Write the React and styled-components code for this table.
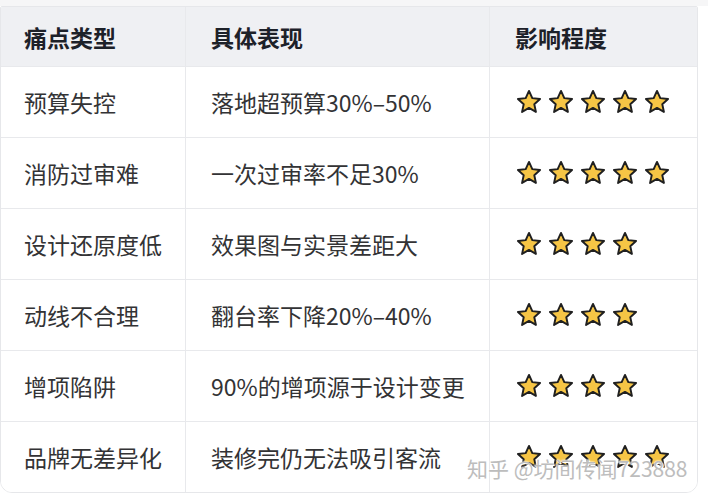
import React from "react";
import styled, { createGlobalStyle } from "styled-components";

const GlobalStyle = createGlobalStyle`
  html, body {
    margin: 0;
    padding: 0;
    background: #ffffff;
  }
  body {
    font-family: "Noto Sans CJK SC", "Noto Sans", sans-serif;
  }
`;

const Page = styled.div`
  position: relative;
  width: 708px;
  height: 500px;
  padding-top: 6px;
  box-sizing: border-box;
  background: linear-gradient(#f6f6f7 0, #f6f6f7 6px, #ffffff 6px);
`;

const Table = styled.div`
  width: 698px;
  border: 1px solid #e6e7ea;
  border-radius: 2px 2px 12px 12px;
  overflow: hidden;
  box-sizing: border-box;
  display: grid;
  grid-template-columns: 185px 304px 1fr;
`;

const Cell = styled.div`
  height: ${(p) => p.$h}px;
  display: flex;
  align-items: center;
  padding-left: ${(p) => (p.$first ? 23 : 25)}px;
  box-sizing: border-box;
  background: ${(p) => (p.$head ? "#eff0f3" : "#ffffff")};
  border-right: ${(p) => (p.$last ? "none" : "1px solid #e8e9ec")};
  border-bottom: ${(p) => (p.$bottom ? "none" : "1px solid #e8e9ec")};
  font-size: 23px;
  font-weight: ${(p) => (p.$head ? 700 : 400)};
  color: ${(p) => (p.$head ? "#1d2129" : "#333335")};
  letter-spacing: 0;
  white-space: nowrap;
`;

const Stars = styled.div`
  display: flex;
  gap: 6px;
  padding-left: 1px;
`;

const Watermark = styled.div`
  position: absolute;
  left: 467px;
  top: 453px;
  font-size: 21px;
  color: #bdbdbd;
  text-shadow: 0 0 2px #ffffff, 0 0 2px #ffffff, 1px 1px 0 #ffffff;
  white-space: nowrap;
`;

function Star() {
  return (
    <svg width="26" height="26" viewBox="0 0 24 24">
      <path
        d="M12 1.8l3.05 6.6 7.15.8-5.32 4.86 1.5 7.08L12 17.5l-6.38 3.64 1.5-7.08L1.8 9.2l7.15-.8z"
        fill="#f6c545"
        stroke="#202020"
        strokeWidth="1.8"
        strokeLinejoin="round"
      />
    </svg>
  );
}

const rows = [
  ["预算失控", "落地超预算30%–50%", 5],
  ["消防过审难", "一次过审率不足30%", 5],
  ["设计还原度低", "效果图与实景差距大", 4],
  ["动线不合理", "翻台率下降20%–40%", 4],
  ["增项陷阱", "90%的增项源于设计变更", 4],
  ["品牌无差异化", "装修完仍无法吸引客流", 5],
];

export default function App() {
  return (
    <>
      <GlobalStyle />
      <Page>
        <Table>
          <Cell $head $first $h={60}>痛点类型</Cell>
          <Cell $head $h={60}>具体表现</Cell>
          <Cell $head $last $h={60}>影响程度</Cell>
          {rows.map(([a, b, n], i) => {
            const bottom = i === rows.length - 1;
            const h = bottom ? 70 : 71;
            return (
              <React.Fragment key={a}>
                <Cell $first $h={h} $bottom={bottom}>{a}</Cell>
                <Cell $h={h} $bottom={bottom}>{b}</Cell>
                <Cell $last $h={h} $bottom={bottom}>
                  <Stars>
                    {Array.from({ length: n }).map((_, k) => (
                      <Star key={k} />
                    ))}
                  </Stars>
                </Cell>
              </React.Fragment>
            );
          })}
        </Table>
        <Watermark>知乎 @坊间传闻723888</Watermark>
      </Page>
    </>
  );
}
